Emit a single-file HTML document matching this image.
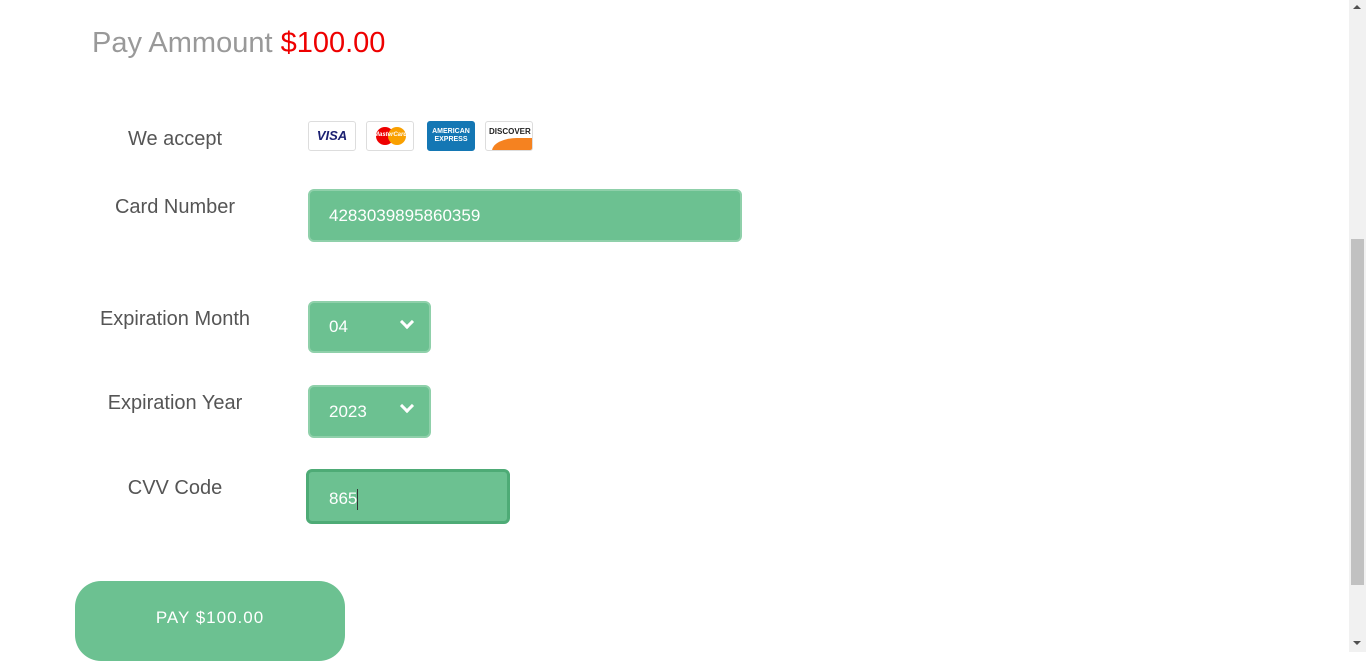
<!DOCTYPE html>
<html><head><style>
body{margin:0;width:1366px;height:652px;overflow:hidden;background:#fff;font-family:"Liberation Sans",sans-serif;position:relative}
.a{position:absolute}
.lbl{position:absolute;width:200px;left:75px;text-align:center;font-size:20px;color:#555}
.f{position:absolute;background:#6cc191;border:2px solid #8fd0aa;border-radius:6px;box-sizing:border-box;color:#fff;font-size:17px;padding-left:19px}
.card{position:absolute;top:121px;width:48px;height:30px;border:1px solid #ddd;border-radius:3px;box-sizing:border-box;background:#fff;overflow:hidden}
.chev{position:absolute;right:17px;top:14px;width:7px;height:7px;border-right:3px solid #fff;border-bottom:3px solid #fff;transform:rotate(45deg)}
</style></head><body>
<div class="a" style="left:92px;top:27px;font-size:29px;color:#999">Pay Ammount <span style="color:#e00">$100.00</span></div>
<div class="lbl" style="top:128px">We accept</div>
<div class="card" style="left:308px"><div style="font:italic bold 13px 'Liberation Sans';color:#1a1f71;text-align:center;line-height:28px">VISA</div></div>
<div class="card" style="left:366px"><div class="a" style="left:9px;top:5px;width:18px;height:18px;border-radius:50%;background:#e00"></div><div class="a" style="left:21px;top:5px;width:18px;height:18px;border-radius:50%;background:#f9a000"></div><div class="a" style="left:7px;top:10px;font:italic bold 6px 'Liberation Sans';color:#fff">MasterCard</div></div>
<div class="card" style="left:427px;background:#1477b4;border-color:#1477b4"><div style="color:#fff;font:bold 7px 'Liberation Sans';text-align:center;padding-top:6px;line-height:8px">AMERICAN<br>EXPRESS</div></div>
<div class="card" style="left:485px"><div class="a" style="right:-10px;bottom:-14px;width:50px;height:26px;background:#f58220;border-radius:50% 0 0 0"></div><div class="a" style="left:3px;top:5px;font:bold 8px 'Liberation Sans';color:#222">DISCOVER</div></div>
<div class="lbl" style="top:196px">Card Number</div>
<div class="f" style="left:308px;top:189px;width:434px;height:53px;line-height:49px">4283039895860359</div>
<div class="lbl" style="top:308px">Expiration Month</div>
<div class="f" style="left:308px;top:301px;width:123px;height:52px;line-height:48px">04<div class="chev"></div></div>
<div class="lbl" style="top:392px">Expiration Year</div>
<div class="f" style="left:308px;top:385px;width:123px;height:53px;line-height:50px">2023<div class="chev"></div></div>
<div class="lbl" style="top:477px">CVV Code</div>
<div class="f" style="left:306px;top:469px;width:204px;height:55px;line-height:53px;border:3px solid #4eab76;padding-left:20px">865<span style="display:inline-block;width:1px;height:21px;background:#333;vertical-align:middle"></span></div>
<div class="a" style="left:75px;top:581px;width:270px;height:80px;border-radius:26px;background:#6cc191;color:#fff;font-size:17px;letter-spacing:1px;text-align:center;line-height:73px">PAY $100.00</div>
<div class="a" style="left:1349px;top:0;width:17px;height:652px;background:#f1f1f1"></div>
<div class="a" style="left:1351px;top:239px;width:13px;height:346px;background:#c1c1c1"></div>
<div class="a" style="left:1353px;top:5px;width:0;height:0;border-left:4px solid transparent;border-right:4px solid transparent;border-bottom:4px solid #505050"></div>
<div class="a" style="left:1353px;top:641px;width:0;height:0;border-left:4px solid transparent;border-right:4px solid transparent;border-top:4px solid #505050"></div>
</body></html>
